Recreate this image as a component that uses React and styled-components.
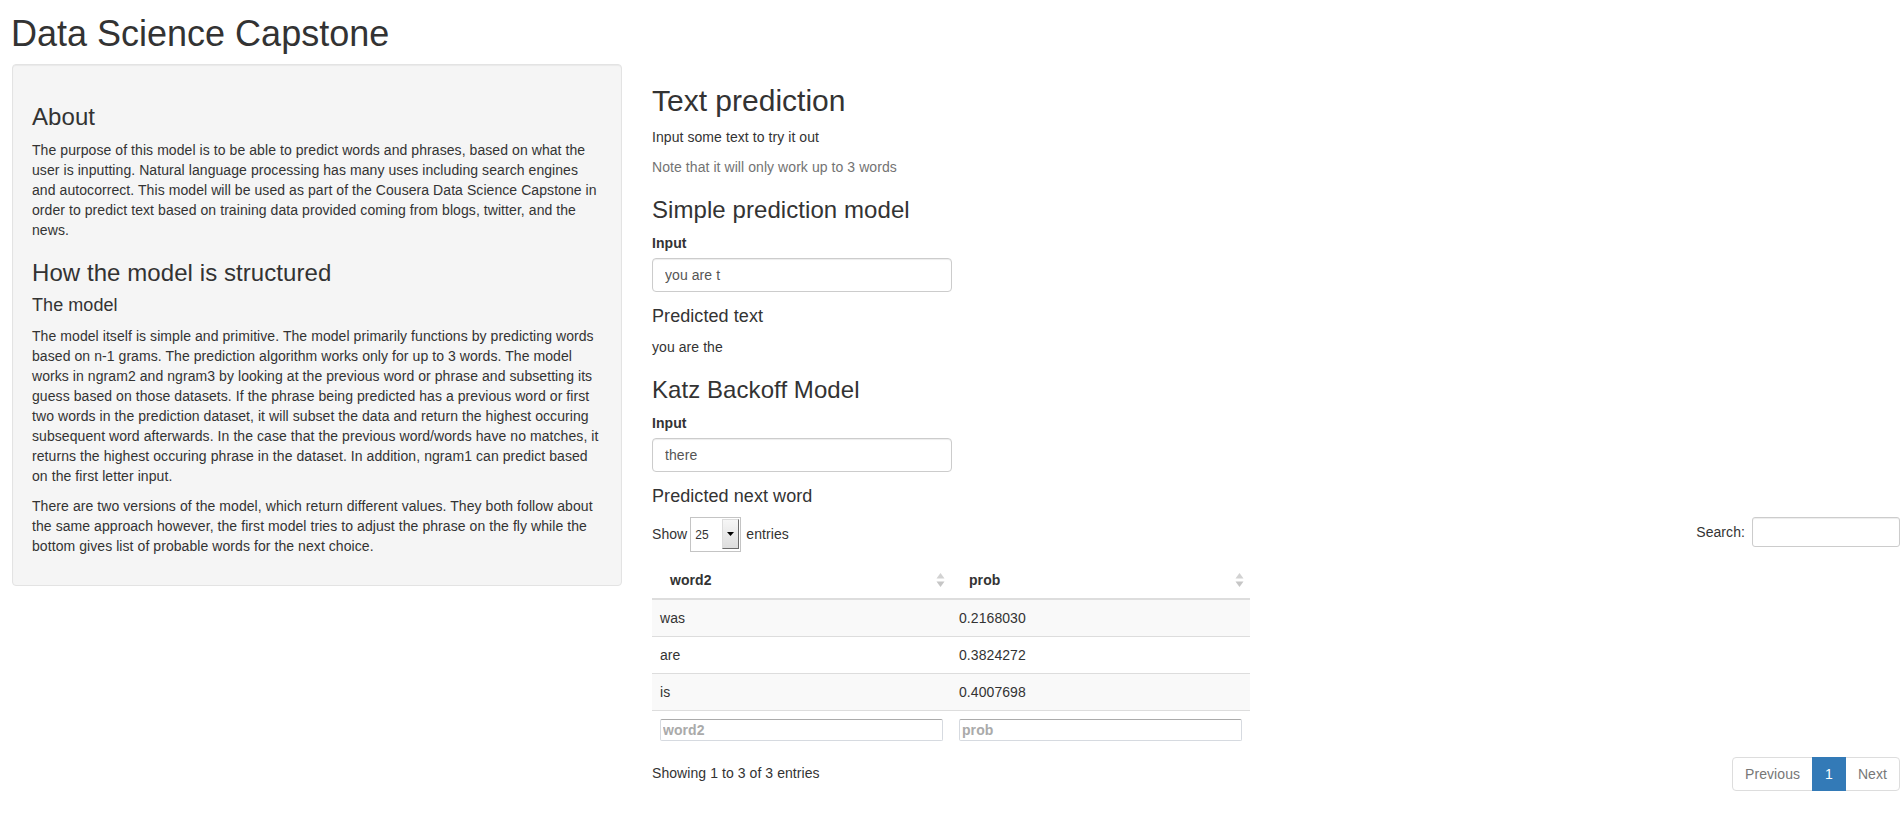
import styled, { createGlobalStyle } from "styled-components";

const GlobalStyle = createGlobalStyle`
  html, body {
    margin: 0;
    background: #fff;
  }
  body {
    font-family: "Liberation Sans", Arial, Helvetica, sans-serif;
    font-size: 14px;
    line-height: 1.42857143;
    letter-spacing: 0.07px;
    color: #333;
  }
  *, *::before, *::after {
    box-sizing: border-box;
  }
  input {
    font: inherit;
    color: inherit;
    letter-spacing: inherit;
    margin: 0;
  }
`;

const rows = [
  { word: "was", prob: "0.2168030" },
  { word: "are", prob: "0.3824272" },
  { word: "is", prob: "0.4007698" },
];

export default function App() {
  return (
    <>
      <GlobalStyle />
      <Page>
        <Title>Data Science Capstone</Title>
        <Columns>
          <Well>
            <H3>About</H3>
            <P>
              The purpose of this model is to be able to predict words and phrases, based on what the user is
              inputting. Natural language processing has many uses including search engines and autocorrect. This
              model will be used as part of the Cousera Data Science Capstone in order to predict text based on
              training data provided coming from blogs, twitter, and the news.
            </P>
            <H3>How the model is structured</H3>
            <H4>The model</H4>
            <P>
              The model itself is simple and primitive. The model primarily functions by predicting words based on
              n-1 grams. The prediction algorithm works only for up to 3 words. The model works in ngram2 and ngram3
              by looking at the previous word or phrase and subsetting its guess based on those datasets. If the
              phrase being predicted has a previous word or first two words in the prediction dataset, it will subset
              the data and return the highest occuring subsequent word afterwards. In the case that the previous
              word/words have no matches, it returns the highest occuring phrase in the dataset. In addition, ngram1
              can predict based on the first letter input.
            </P>
            <P>
              There are two versions of the model, which return different values. They both follow about the same
              approach however, the first model tries to adjust the phrase on the fly while the bottom gives list of
              probable words for the next choice.
            </P>
          </Well>

          <Main>
            <H2>Text prediction</H2>
            <P>Input some text to try it out</P>
            <P $muted>Note that it will only work up to 3 words</P>

            <H3>Simple prediction model</H3>
            <FormGroup>
              <Label>Input</Label>
              <TextInput defaultValue="you are t" />
            </FormGroup>
            <H4>Predicted text</H4>
            <Output>you are the</Output>

            <H3>Katz Backoff Model</H3>
            <FormGroup>
              <Label>Input</Label>
              <TextInput defaultValue="there" />
            </FormGroup>
            <H4>Predicted next word</H4>

            <Controls>
              <LengthLabel>
                Show
                <LengthSelect>
                  <SelectValue>25</SelectValue>
                  <SelectButton>
                    <svg width="7" height="4" viewBox="0 0 7 4">
                      <polygon points="0,0 7,0 3.5,4" fill="#000" />
                    </svg>
                  </SelectButton>
                </LengthSelect>
                entries
              </LengthLabel>
              <FilterLabel>
                Search:
                <SearchInput />
              </FilterLabel>
            </Controls>

            <Table>
              <colgroup>
                <col width="50%" />
                <col width="50%" />
              </colgroup>
              <thead>
                <tr>
                  <HeadCell>
                    word2
                    <SortIcon />
                  </HeadCell>
                  <HeadCell>
                    prob
                    <SortIcon />
                  </HeadCell>
                </tr>
              </thead>
              <tbody>
                {rows.map((r, i) => (
                  <Row key={r.word} $striped={i % 2 === 0}>
                    <Cell>{r.word}</Cell>
                    <Cell>{r.prob}</Cell>
                  </Row>
                ))}
              </tbody>
              <tfoot>
                <tr>
                  <FootCell>
                    <FilterInput placeholder="word2" />
                  </FootCell>
                  <FootCell>
                    <FilterInput placeholder="prob" />
                  </FootCell>
                </tr>
              </tfoot>
            </Table>

            <Footer>
              <Info>Showing 1 to 3 of 3 entries</Info>
              <Pagination>
                <PageLink $disabled>Previous</PageLink>
                <PageLink $active>1</PageLink>
                <PageLink $disabled>Next</PageLink>
              </Pagination>
            </Footer>
          </Main>
        </Columns>
      </Page>
    </>
  );
}

const SortIcon = () => (
  <SortGlyph width="9" height="15" viewBox="0 0 9 15">
    <polygon points="0.5,6 4.5,0.5 8.5,6" fill="#d2d2d2" />
    <polygon points="0.5,9 4.5,14.5 8.5,9" fill="#c6c6c6" />
  </SortGlyph>
);

const Page = styled.div`
  padding: 0 4px 0 12px;
`;

const Title = styled.h1`
  margin: 14px 0 10px -1px;
  font-size: 36px;
  font-weight: 500;
  line-height: 1.1;
  letter-spacing: 0;
`;

const Columns = styled.div`
  display: grid;
  grid-template-columns: 610px 1fr;
  column-gap: 30px;
  align-items: start;
`;

const Well = styled.div`
  min-height: 20px;
  padding: 19px;
  background-color: #f5f5f5;
  border: 1px solid #e3e3e3;
  border-radius: 4px;
  box-shadow: inset 0 1px 1px rgba(0, 0, 0, 0.05);
`;

const Main = styled.div``;

const H2 = styled.h2`
  margin: 20px 0 10px;
  font-size: 30px;
  font-weight: 500;
  line-height: 1.1;
  letter-spacing: 0;
`;

const H3 = styled.h3`
  margin: 20px 0 10px;
  font-size: 24px;
  font-weight: 500;
  line-height: 1.1;
`;

const H4 = styled.h4`
  margin: 10px 0 10px;
  font-size: 18px;
  font-weight: 500;
  line-height: 1.1;
`;

const P = styled.p`
  margin: 0 0 10px;
  color: ${(p) => (p.$muted ? "#737373" : "inherit")};
`;

const FormGroup = styled.div`
  width: 300px;
  margin-bottom: 15px;
`;

const Label = styled.label`
  display: inline-block;
  margin-bottom: 5px;
  font-weight: 700;
`;

const TextInput = styled.input`
  display: block;
  width: 100%;
  height: 34px;
  padding: 6px 12px;
  font-size: 14px;
  color: #555;
  background: #fff;
  border: 1px solid #ccc;
  border-radius: 4px;
  box-shadow: inset 0 1px 1px rgba(0, 0, 0, 0.075);
  outline: none;
`;

const Output = styled.div`
  min-height: 20px;
`;

const Controls = styled.div`
  display: flex;
  justify-content: space-between;
  align-items: flex-start;
  height: 39px;
`;

const LengthLabel = styled.label`
  display: inline-flex;
  align-items: center;
  white-space: nowrap;
`;

const LengthSelect = styled.span`
  display: inline-flex;
  align-items: stretch;
  width: 51px;
  height: 35px;
  margin: 0 5px 0 3px;
  padding: 1px 1px 2px 4px;
  background: #fff;
  border: 1px solid #c4c4c4;
`;

const SelectValue = styled.span`
  flex: 1;
  display: flex;
  align-items: center;
  padding-top: 4px;
  font-size: 12px;
  color: #333;
`;

const SelectButton = styled.span`
  display: flex;
  align-items: center;
  justify-content: center;
  width: 17px;
  background: linear-gradient(#f6f6f6, #dddddd);
  border: 1px solid #dcdcdc;
  border-right-color: #6b6b6b;
  border-bottom-color: #6b6b6b;
`;

const FilterLabel = styled.label`
  display: inline-flex;
  align-items: center;
  white-space: nowrap;
`;

const SearchInput = styled.input`
  width: 148px;
  height: 30px;
  margin-left: 7px;
  padding: 5px 10px;
  font-size: 12px;
  border: 1px solid #ccc;
  border-radius: 3px;
  box-shadow: inset 0 1px 1px rgba(0, 0, 0, 0.075);
  outline: none;
`;

const Table = styled.table`
  width: 598px;
  margin: 6px 0;
  border-collapse: collapse;
  border-spacing: 0;
  table-layout: fixed;
`;

const HeadCell = styled.th`
  position: relative;
  padding: 8px 30px 8px 18px;
  text-align: left;
  font-weight: 700;
  border-bottom: 2px solid #ddd;
`;

const SortGlyph = styled.svg`
  position: absolute;
  right: 6px;
  top: 50%;
  transform: translateY(-50%);
`;

const Row = styled.tr`
  background: ${(p) => (p.$striped ? "#f9f9f9" : "#fff")};
`;

const Cell = styled.td`
  padding: 8px;
  border-top: 1px solid #ddd;
`;

const FootCell = styled.th`
  padding: 8px;
  border-top: 1px solid #ddd;
  font-weight: 700;
  text-align: left;
`;

const FilterInput = styled.input`
  display: block;
  width: 100%;
  height: 22px;
  padding: 0 2px;
  background: #fff;
  border: 1px solid #d6dae0;
  border-top-color: #ababab;
  border-radius: 2px;
  outline: none;

  &::placeholder {
    color: #aaa;
    opacity: 1;
  }
`;

const Footer = styled.div`
  display: flex;
  justify-content: space-between;
  align-items: flex-start;
`;

const Info = styled.div`
  padding-top: 8px;
  white-space: nowrap;
`;

const Pagination = styled.div`
  display: flex;
  margin: 2px 0;
`;

const PageLink = styled.span`
  position: relative;
  padding: 6px 12px;
  margin-left: -1px;
  line-height: 1.42857143;
  color: ${(p) => (p.$active ? "#fff" : p.$disabled ? "#777" : "#337ab7")};
  background: ${(p) => (p.$active ? "#337ab7" : "#fff")};
  border: 1px solid ${(p) => (p.$active ? "#337ab7" : "#ddd")};
  z-index: ${(p) => (p.$active ? 2 : 1)};

  &:first-child {
    margin-left: 0;
    border-radius: 4px 0 0 4px;
  }
  &:last-child {
    border-radius: 0 4px 4px 0;
  }
`;
